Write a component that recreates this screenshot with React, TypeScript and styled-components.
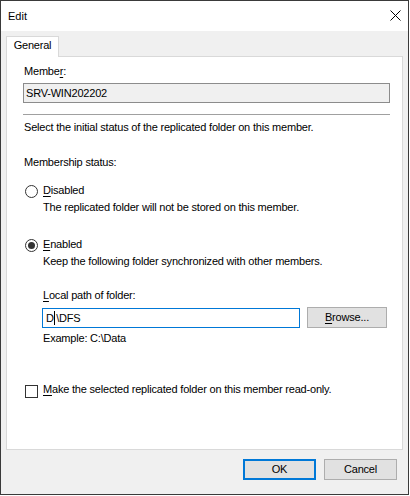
import React from "react";
import styled, { createGlobalStyle } from "styled-components";

const Global = createGlobalStyle`
  html, body { margin: 0; padding: 0; background: #ffffff; }
  body {
    font-family: "Liberation Sans", Arial, sans-serif;
    font-size: 11px;
    line-height: 15px;
    letter-spacing: -0.2px;
    color: #000000;
  }
  #root { width: 410px; height: 496px; }
  u { text-decoration: underline; text-underline-offset: 1.5px; text-decoration-thickness: 1px; }
`;

const Window = styled.div`
  width: 409px;
  height: 495px;
  box-sizing: border-box;
  border: 1px solid #3a3a3a;
  background: #f0f0f0;
  display: flex;
  flex-direction: column;
`;

const TitleBar = styled.div`
  flex: none;
  height: 30px;
  background: #ffffff;
  display: flex;
  align-items: center;
  justify-content: space-between;
  padding: 0 7px;
`;

const Title = styled.span`
  letter-spacing: 0;
`;

const CloseIcon = styled.svg`
  align-self: flex-start;
  margin-top: 9px;
  width: 11px;
  height: 11px;
`;

const Client = styled.div`
  flex: 1;
  display: flex;
  flex-direction: column;
  padding: 5px 5px 0 5px;
`;

const TabStrip = styled.div`
  display: flex;
  height: 20px;
`;

const Tab = styled.div`
  position: relative;
  z-index: 1;
  box-sizing: border-box;
  width: 53px;
  height: 21px;
  padding-top: 1px;
  text-align: center;
  background: #ffffff;
  border: 1px solid #d9d9d9;
  border-bottom: none;
`;

const Panel = styled.div`
  box-sizing: border-box;
  height: 394px;
  background: #ffffff;
  border: 1px solid #d9d9d9;
  padding: 7px 0 0 16px;
  display: flex;
  flex-direction: column;
  align-items: flex-start;
`;

const Text = styled.div<{ $top?: number; $indent?: number }>`
  margin-top: ${(p) => p.$top ?? 0}px;
  padding-left: ${(p) => p.$indent ?? 1}px;
  white-space: nowrap;
`;

const ReadonlyField = styled.div`
  box-sizing: border-box;
  margin-top: 4px;
  width: 367px;
  height: 20px;
  padding-left: 2px;
  line-height: 18px;
  background: #f0f0f0;
  border: 1px solid #8c8c8c;
`;

const Separator = styled.div`
  margin-top: 11px;
  width: 367px;
  height: 1px;
  background: #a0a0a0;
`;

const OptionRow = styled.div<{ $top: number }>`
  margin-top: ${(p) => p.$top}px;
  padding-left: 2px;
  display: flex;
  align-items: flex-start;
  gap: 5px;
`;

const Radio = styled.span<{ $checked?: boolean }>`
  box-sizing: border-box;
  margin-top: 2px;
  width: 13px;
  height: 13px;
  border: 1px solid #333333;
  border-radius: 50%;
  display: flex;
  align-items: center;
  justify-content: center;
  &::after {
    content: "";
    width: 7px;
    height: 7px;
    border-radius: 50%;
    background: ${(p) => (p.$checked ? "#333333" : "transparent")};
  }
`;

const Checkbox = styled.span`
  box-sizing: border-box;
  margin-top: 3px;
  width: 13px;
  height: 13px;
  border: 1px solid #333333;
  background: #ffffff;
`;

const FolderBlock = styled.div`
  padding-left: 19px;
  display: flex;
  flex-direction: column;
  align-items: flex-start;
`;

const PathRow = styled.div`
  margin-top: 4px;
  display: flex;
  align-items: flex-end;
  gap: 7px;
`;

const PathInput = styled.div`
  box-sizing: border-box;
  width: 258px;
  height: 20px;
  padding-left: 3px;
  line-height: 18px;
  background: #ffffff;
  border: 1px solid #0078d7;
  display: flex;
  align-items: center;
`;

const Caret = styled.span`
  display: inline-block;
  width: 1px;
  height: 14px;
  margin: 0 1px 0 0.5px;
  background: #000000;
`;

const Button = styled.div<{ $default?: boolean; $width: number }>`
  box-sizing: border-box;
  width: ${(p) => p.$width}px;
  height: 21px;
  display: flex;
  align-items: center;
  justify-content: center;
  background: #e1e1e1;
  border: ${(p) => (p.$default ? "2px solid #0078d7" : "1px solid #adadad")};
`;

const Footer = styled.div`
  display: flex;
  justify-content: flex-end;
  gap: 8px;
  padding: 9px 6px 0 0;
`;

export default function App() {
  return (
    <>
      <Global />
      <Window>
        <TitleBar>
          <Title>Edit</Title>
          <CloseIcon viewBox="0 0 11 11">
            <path d="M0.5 0.5 L10.5 10.5 M10.5 0.5 L0.5 10.5" stroke="#000" strokeWidth="1" fill="none" />
          </CloseIcon>
        </TitleBar>
        <Client>
          <TabStrip>
            <Tab>General</Tab>
          </TabStrip>
          <Panel>
            <Text>
              Membe<u>r</u>:
            </Text>
            <ReadonlyField>SRV-WIN202202</ReadonlyField>
            <Separator />
            <Text $top={5}>Select the initial status of the replicated folder on this member.</Text>
            <Text $top={20}>Membership status:</Text>
            <OptionRow $top={13}>
              <Radio />
              <span>
                <u>D</u>isabled
              </span>
            </OptionRow>
            <Text $top={2} $indent={20}>
              The replicated folder will not be stored on this member.
            </Text>
            <OptionRow $top={22}>
              <Radio $checked />
              <span>
                <u>E</u>nabled
              </span>
            </OptionRow>
            <Text $top={2} $indent={20}>
              Keep the following folder synchronized with other members.
            </Text>
            <FolderBlock>
              <Text $top={19}>
                <u>L</u>ocal path of folder:
              </Text>
              <PathRow>
                <PathInput>
                  D<Caret />\DFS
                </PathInput>
                <Button $width={80}>
                  <span>
                    <u>B</u>rowse...
                  </span>
                </Button>
              </PathRow>
              <Text $top={3}>Example: C:\Data</Text>
            </FolderBlock>
            <OptionRow $top={36}>
              <Checkbox />
              <span>
                <u>M</u>ake the selected replicated folder on this member read-only.
              </span>
            </OptionRow>
          </Panel>
          <Footer>
            <Button $default $width={73}>OK</Button>
            <Button $width={73}>Cancel</Button>
          </Footer>
        </Client>
      </Window>
    </>
  );
}
